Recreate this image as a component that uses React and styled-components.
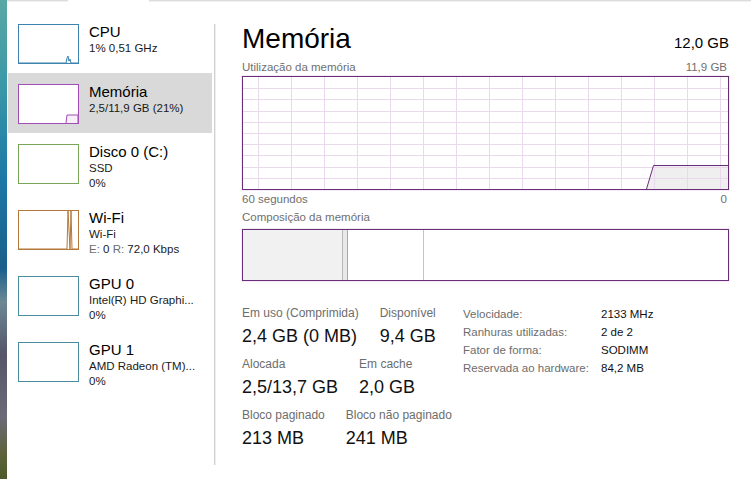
import React from 'react';
import styled, { createGlobalStyle } from 'styled-components';

const GlobalStyle = createGlobalStyle`
  html, body {
    margin: 0;
    padding: 0;
  }
  body {
    font-family: "Liberation Sans", Arial, sans-serif;
    background: #fff;
    color: #000;
  }
`;

const Screen = styled.div`
  display: flex;
  width: 751px;
  height: 479px;
  overflow: hidden;
`;

const Wallpaper = styled.div`
  flex: none;
  width: 7px;
  background: linear-gradient(
    180deg,
    #5aa8a4 0%,
    #3a98a8 18%,
    #1c77a6 38%,
    #1a5f8a 56%,
    #6b8894 63%,
    #55566a 74%,
    #6c6a78 87%,
    #5d6238 95%,
    #4d5a2a 100%
  );
`;

const Window = styled.div`
  flex: 1;
  display: flex;
  flex-direction: column;
  background: #fff;
`;

const TabEdge = styled.div`
  flex: none;
  display: flex;
  height: 2px;
`;

const EdgeLine = styled.div`
  flex: ${(p) => (p.$w ? 'none' : 1)};
  width: ${(p) => (p.$w ? `${p.$w}px` : 'auto')};
  height: 1px;
  background: #dcdcdc;
  border-bottom: 1px solid #f1f1f1;
`;

const EdgeGap = styled.div`
  flex: none;
  width: 81px;
`;

const Body = styled.div`
  flex: 1;
  display: flex;
`;

const Sidebar = styled.div`
  flex: none;
  width: 207px;
  box-sizing: border-box;
  padding: 11px 2px 0 1px;
  display: flex;
  flex-direction: column;
`;

const Item = styled.div`
  display: flex;
  gap: 10px;
  padding: 9px 10px 8px;
  background: ${(p) => (p.$active ? '#d9d9d9' : 'transparent')};
`;

const Thumb = styled.div`
  flex: none;
  width: 61px;
  height: 40px;
  box-sizing: border-box;
  margin: 2px 0 1px;
  border: 1px solid ${(p) => p.$color};
  background: #fff;
  svg {
    display: block;
  }
`;

const ItemText = styled.div`
  display: flex;
  flex-direction: column;
  min-width: 0;
`;

const ItemTitle = styled.div`
  font-size: 15px;
  line-height: 19px;
  color: #000;
  white-space: nowrap;
`;

const ItemLine = styled.div`
  font-size: 11.5px;
  line-height: 15px;
  color: #1a1a1a;
  white-space: nowrap;
`;

const Dim = styled.span`
  color: #6d6d6d;
`;

const Divider = styled.div`
  flex: none;
  width: 1px;
  margin: 22px 0 14px;
  background: #d0d0d0;
  box-shadow: 1px 0 0 #eeeeee;
`;

const Main = styled.div`
  flex: 1;
  min-width: 0;
  padding: 21px 22px 0 27px;
  display: flex;
  flex-direction: column;
`;

const TitleRow = styled.div`
  display: flex;
  justify-content: space-between;
  align-items: baseline;
`;

const Title = styled.h1`
  margin: 0;
  font-size: 28px;
  line-height: 32px;
  font-weight: normal;
  color: #000;
`;

const Capacity = styled.div`
  font-size: 15px;
  color: #000;
`;

const Caption = styled.div`
  display: flex;
  justify-content: space-between;
  margin-top: ${(p) => p.$mt || 0}px;
  padding-right: ${(p) => p.$pr || 0}px;
  font-size: 11.5px;
  line-height: 14px;
  color: #6f6f6f;
`;

const ChartBox = styled.div`
  margin-top: 2px;
  height: 114px;
  box-sizing: border-box;
  border: 1px solid #6a2d78;
  box-shadow: 0 0 0 1px #f6ebf8;
  svg {
    display: block;
  }
`;

const CompBar = styled.div`
  margin-top: 5px;
  height: 52px;
  box-sizing: border-box;
  border: 1px solid #6a2d78;
  box-shadow: 0 0 0 1px #f6ebf8;
  display: flex;
`;

const Segment = styled.div`
  flex: ${(p) => (p.$w ? 'none' : 1)};
  width: ${(p) => (p.$w ? `${p.$w}px` : 'auto')};
  background: ${(p) => p.$bg || '#fff'};
  border-right: ${(p) => (p.$line ? `1px solid ${p.$line}` : 'none')};
`;

const Stats = styled.div`
  display: flex;
  margin-top: 25px;
`;

const LeftStats = styled.div`
  flex: none;
  width: 221px;
  display: flex;
  flex-direction: column;
  gap: 10px;
`;

const StatRow = styled.div`
  display: flex;
  gap: 21px;
`;

const Stat = styled.div`
  display: flex;
  flex-direction: column;
  gap: 4px;
`;

const StatLabel = styled.div`
  font-size: 12px;
  line-height: 15px;
  color: #6d6d6d;
  white-space: nowrap;
`;

const StatValue = styled.div`
  font-size: 18px;
  line-height: 22px;
  color: #111;
  white-space: nowrap;
`;

const Specs = styled.div`
  margin-top: -1px;
  display: grid;
  grid-template-columns: 138px auto;
  align-content: start;
  font-size: 11.5px;
  line-height: 18px;
  white-space: nowrap;
`;

const SpecLabel = styled.div`
  color: #6d6d6d;
`;

const SpecValue = styled.div`
  color: #111;
`;

const devices = [
  {
    title: 'CPU',
    lines: ['1% 0,51 GHz'],
    color: '#3d83ad',
    graph: { pts: '0,38 47,38 48,33 49,31 50,36 51,34 52,38 59,38', fill: '#e8f2f8' },
  },
  {
    title: 'Memória',
    lines: ['2,5/11,9 GB (21%)'],
    color: '#a04db5',
    active: true,
    graph: { pts: '47,38 48,30 59,30 59,38', fill: '#f7f0f8' },
  },
  { title: 'Disco 0 (C:)', lines: ['SSD', '0%'], color: '#7aa657' },
  {
    title: 'Wi-Fi',
    lines: ['Wi-Fi', 'net'],
    color: '#b4783a',
    graph: { pts: '0,38 48,38 49,0 51,38 52,0 53,38 59,38', fill: 'none' },
  },
  { title: 'GPU 0', lines: ['Intel(R) HD Graphi...', '0%'], color: '#4b8d9e' },
  { title: 'GPU 1', lines: ['AMD Radeon (TM)...', '0%'], color: '#4b8d9e' },
];

function MiniGraph({ color, graph }) {
  return (
    <svg width="59" height="38" viewBox="0 0 59 38">
      {graph && (
        <polyline
          points={graph.pts}
          fill={graph.fill}
          stroke={color}
          strokeWidth="1"
        />
      )}
    </svg>
  );
}

function DeviceLine({ text }) {
  if (text === 'net') {
    return (
      <ItemLine>
        <Dim>E:</Dim> 0 <Dim>R:</Dim> 72,0 Kbps
      </ItemLine>
    );
  }
  return <ItemLine>{text}</ItemLine>;
}

function UsageChart() {
  const w = 485;
  const h = 112;
  const vx = Array.from({ length: 15 }, (_, i) => 15 + i * 33 + 0.5);
  const hy = Array.from({ length: 9 }, (_, i) => Math.round((i + 1) * 11.2) + 0.5);
  return (
    <svg width={w} height={h} viewBox={`0 0 ${w} ${h}`}>
      <polygon points="404,112 411,88 485,88 485,112" fill="#efefef" />
      {vx.map((x) => (
        <line key={`v${x}`} x1={x} y1="0" x2={x} y2={h} stroke="#ead8ed" strokeWidth="1" />
      ))}
      {hy.map((y) => (
        <line key={`h${y}`} x1="0" y1={y} x2={w} y2={y} stroke="#ead8ed" strokeWidth="1" />
      ))}
      <polyline points="403.5,112 410.5,88.5 485,88.5" fill="none" stroke="#6a2d78" strokeWidth="1" />
    </svg>
  );
}

const stats = [
  [
    ['Em uso (Comprimida)', '2,4 GB (0 MB)'],
    ['Disponível', '9,4 GB'],
  ],
  [
    ['Alocada', '2,5/13,7 GB'],
    ['Em cache', '2,0 GB'],
  ],
  [
    ['Bloco paginado', '213 MB'],
    ['Bloco não paginado', '241 MB'],
  ],
];

const specs = [
  ['Velocidade:', '2133 MHz'],
  ['Ranhuras utilizadas:', '2 de 2'],
  ['Fator de forma:', 'SODIMM'],
  ['Reservada ao hardware:', '84,2 MB'],
];

export default function App() {
  return (
    <>
      <GlobalStyle />
      <Screen>
        <Wallpaper />
        <Window>
          <TabEdge>
            <EdgeLine $w={61} />
            <EdgeGap />
            <EdgeLine />
          </TabEdge>
          <Body>
            <Sidebar>
              {devices.map((d) => (
                <Item key={d.title} $active={d.active}>
                  <Thumb $color={d.color}>
                    <MiniGraph color={d.color} graph={d.graph} />
                  </Thumb>
                  <ItemText>
                    <ItemTitle>{d.title}</ItemTitle>
                    {d.lines.map((l, i) => (
                      <DeviceLine key={i} text={l} />
                    ))}
                  </ItemText>
                </Item>
              ))}
            </Sidebar>
            <Divider />
            <Main>
              <TitleRow>
                <Title>Memória</Title>
                <Capacity>12,0 GB</Capacity>
              </TitleRow>
              <Caption $mt={5} $pr={2}>
                <span>Utilização da memória</span>
                <span>11,9 GB</span>
              </Caption>
              <ChartBox>
                <UsageChart />
              </ChartBox>
              <Caption $mt={2} $pr={2}>
                <span>60 segundos</span>
                <span>0</span>
              </Caption>
              <Caption $mt={4}>
                <span>Composição da memória</span>
              </Caption>
              <CompBar>
                <Segment $w={99} $bg="#f1f1f1" $line="#b9b9b9" />
                <Segment $w={4} $bg="#e8e8e8" $line="#a9a9a9" />
                <Segment $w={75} $line="#c4c4c4" />
                <Segment />
              </CompBar>
              <Stats>
                <LeftStats>
                  {stats.map((row, i) => (
                    <StatRow key={i}>
                      {row.map(([label, value]) => (
                        <Stat key={label}>
                          <StatLabel>{label}</StatLabel>
                          <StatValue>{value}</StatValue>
                        </Stat>
                      ))}
                    </StatRow>
                  ))}
                </LeftStats>
                <Specs>
                  {specs.map(([label, value]) => (
                    <React.Fragment key={label}>
                      <SpecLabel>{label}</SpecLabel>
                      <SpecValue>{value}</SpecValue>
                    </React.Fragment>
                  ))}
                </Specs>
              </Stats>
            </Main>
          </Body>
        </Window>
      </Screen>
    </>
  );
}
